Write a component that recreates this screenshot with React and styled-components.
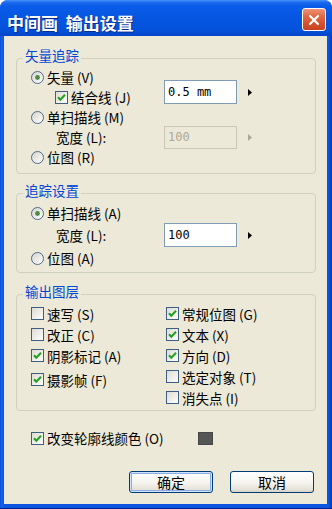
import React, { useId } from 'react';
import styled, { createGlobalStyle } from 'styled-components';

const GlobalStyle = createGlobalStyle`
  html, body {
    margin: 0;
    padding: 0;
    background: #ffffff;
  }
  body {
    font-family: "Noto Sans CJK SC", "Noto Sans", sans-serif;
    color: #000;
  }
`;

const Window = styled.div`
  width: 332px;
  height: 509px;
  box-sizing: border-box;
  display: flex;
  flex-direction: column;
  background: linear-gradient(to right, #0A4FD8 0, #1A62EA 2px, #0B55E0 4px, #0B55E0 calc(100% - 3px), #0036B8 100%);
  border-radius: 8px 8px 0 0;
  border-bottom: 1px solid #001E8C;
  overflow: hidden;
`;

const TitleBar = styled.div`
  height: 36px;
  flex-shrink: 0;
  display: flex;
  align-items: center;
  justify-content: space-between;
  padding: 0 6px 0 7px;
  background: linear-gradient(
    to bottom,
    #4A95FA 0,
    #1F6EF0 2px,
    #0A5CE8 6px,
    #0656E2 50%,
    #0551D9 85%,
    #0545C8 100%
  );
`;

const Title = styled.span`
  color: #ffffff;
  font-size: 17px;
  font-weight: bold;
  padding-top: 8px;
  word-spacing: 4px;
  text-shadow: 1px 1px 0 #0B2A8A;
`;

const CloseButton = styled.div`
  width: 24px;
  height: 23px;
  box-sizing: border-box;
  margin-top: 3px;
  border: 1px solid #ffffff;
  border-radius: 3px;
  background: linear-gradient(to bottom, #EE9478 0%, #E16845 35%, #D4502C 70%, #C8421F 100%);
  display: flex;
  align-items: center;
  justify-content: center;
`;

const Body = styled.div`
  flex: 1;
  margin: 0 5px 4px 4px;
  background: #ECE9D8;
  padding: 22px 11px 0 12px;
  display: flex;
  flex-direction: column;
`;

const Group = styled.div`
  border: 1px solid #D0D0BF;
  border-radius: 4px;
  margin-top: ${p => p.$gap || 0}px;
  padding: 0 8px ${p => p.$padBottom}px 14px;
`;

const GroupTitle = styled.div`
  width: fit-content;
  margin: -12px 0 ${p => p.$after}px -8px;
  padding: 0 2px;
  background: #ECE9D8;
  color: #0046D5;
  font-size: 13.5px;
  line-height: 16px;
`;

const TraceGrid = styled.div`
  display: grid;
  grid-template-columns: 133px auto;
  grid-template-rows: ${p => p.$rows};
  align-items: center;
`;

const OptionRow = styled.div`
  display: flex;
  align-items: center;
  gap: 3px;
  height: ${p => p.$height || 20}px;
  padding-left: ${p => p.$indent || 0}px;
  margin-top: ${p => p.$shift || 0}px;
  grid-column: 1;
`;

const Label = styled.span`
  font-size: 13.5px;
  line-height: 16px;
  white-space: nowrap;
`;

const SpinField = styled.div`
  grid-column: 2;
  grid-row: ${p => p.$row};
  align-self: ${p => p.$align || 'center'};
  margin-bottom: ${p => p.$lift || 0}px;
  display: flex;
  align-items: center;
  gap: 11px;
`;

const TextBox = styled.div`
  width: 73px;
  height: ${p => (p.$disabled ? 23 : 24)}px;
  box-sizing: border-box;
  border: 1px solid ${p => (p.$disabled ? '#C9C7BA' : '#7F9DB9')};
  background: ${p => (p.$disabled ? '#ECE9D8' : '#ffffff')};
  color: ${p => (p.$disabled ? '#ACA899' : '#000000')};
  font-family: "DejaVu Sans Mono", "Liberation Mono", monospace;
  font-size: 12px;
  padding: 0 3px;
  display: flex;
  align-items: center;
`;

const LayerColumns = styled.div`
  display: flex;
`;

const LayerColumn = styled.div`
  width: 135px;
  display: flex;
  flex-direction: column;
`;

const OutlineRow = styled.div`
  display: grid;
  grid-template-columns: 167px auto;
  align-items: center;
  height: 20px;
  margin-top: 17px;
  padding-left: 15px;
`;

const Swatch = styled.div`
  width: 15px;
  height: 13px;
  box-sizing: border-box;
  background: #555555;
  border: 1px solid #474747;
`;

const ButtonRow = styled.div`
  display: flex;
  justify-content: flex-end;
  gap: 17px;
  margin-top: 23px;
  padding-right: 2px;
`;

const Button = styled.button`
  width: 84px;
  height: 22px;
  padding: 0;
  font-family: "Noto Sans CJK SC", sans-serif;
  font-size: 14px;
  line-height: 1;
  color: #000;
  border: 1px solid #003C74;
  border-radius: 3px;
  background: linear-gradient(to bottom, #FFFFFF 0%, #F5F4EF 55%, #E3E0D6 90%, #D6D0C5 100%);
  box-shadow: ${p => (p.$default ? 'inset 0 0 0 1px #CEE3FF, inset 0 0 0 2px #89ADE4' : 'none')};
`;

const Radio = ({ checked }) => {
  const id = useId();
  return (
    <svg width="13" height="13" viewBox="0 0 13 13">
      <defs>
        <linearGradient id={id} x1="0" y1="0" x2="1" y2="1">
          <stop offset="0" stopColor="#D6D4C8" />
          <stop offset="1" stopColor="#FFFFFF" />
        </linearGradient>
      </defs>
      <circle cx="6.5" cy="6.5" r="6" fill={`url(#${id})`} stroke="#4C6A8C" />
      {checked && <circle cx="6.5" cy="6.5" r="2.4" fill="#4C8A47" />}
    </svg>
  );
};

const Checkbox = ({ checked }) => {
  const id = useId();
  return (
    <svg width="13" height="13" viewBox="0 0 13 13">
      <defs>
        <linearGradient id={id} x1="0" y1="0" x2="1" y2="1">
          <stop offset="0" stopColor="#DCDAD0" />
          <stop offset="1" stopColor="#FFFFFF" />
        </linearGradient>
      </defs>
      <rect x="0.5" y="0.5" width="12" height="12" fill={`url(#${id})`} stroke="#3E5F82" />
      {checked && (
        <path d="M3 6.3 L5.3 8.8 L10 3.8" fill="none" stroke="#21A121" strokeWidth="2" />
      )}
    </svg>
  );
};

const Arrow = ({ disabled }) => (
  <svg width="4" height="7" viewBox="0 0 4 7">
    <polygon points="0,0 4,3.5 0,7" fill={disabled ? '#ACA899' : '#000000'} />
  </svg>
);

const CloseIcon = () => (
  <svg width="12" height="12" viewBox="0 0 12 12">
    <path d="M2 2 L10 10 M10 2 L2 10" stroke="#ffffff" strokeWidth="2.2" strokeLinecap="round" />
  </svg>
);

const leftLayers = [
  { label: '速写 (S)', checked: false },
  { label: '改正 (C)', checked: false },
  { label: '阴影标记 (A)', checked: true },
  { label: '摄影帧 (F)', checked: true, shift: 3 },
];

const rightLayers = [
  { label: '常规位图 (G)', checked: true },
  { label: '文本 (X)', checked: true },
  { label: '方向 (D)', checked: true },
  { label: '选定对象 (T)', checked: false },
  { label: '消失点 (I)', checked: false },
];

const LayerList = ({ items }) => (
  <LayerColumn>
    {items.map(item => (
      <OptionRow key={item.label} $height={21} $shift={item.shift}>
        <Checkbox checked={item.checked} />
        <Label>{item.label}</Label>
      </OptionRow>
    ))}
  </LayerColumn>
);

export default function App() {
  return (
    <>
      <GlobalStyle />
      <Window>
        <TitleBar>
          <Title>中间画 输出设置</Title>
          <CloseButton>
            <CloseIcon />
          </CloseButton>
        </TitleBar>
        <Body>
          <Group $padBottom={6}>
            <GroupTitle $after={4}>矢量追踪</GroupTitle>
            <TraceGrid $rows="20px 20px 20px 20px 20px">
              <OptionRow style={{ gridRow: 1 }}>
                <Radio checked />
                <Label>矢量 (V)</Label>
              </OptionRow>
              <OptionRow style={{ gridRow: 2 }} $indent={24}>
                <Checkbox checked />
                <Label>结合线 (J)</Label>
              </OptionRow>
              <SpinField $row="1 / 3" $align="end" $lift={3}>
                <TextBox>0.5 mm</TextBox>
                <Arrow />
              </SpinField>
              <OptionRow style={{ gridRow: 3 }}>
                <Radio />
                <Label>单扫描线 (M)</Label>
              </OptionRow>
              <OptionRow style={{ gridRow: 4 }} $indent={25}>
                <Label>宽度 (L):</Label>
              </OptionRow>
              <SpinField $row="4">
                <TextBox $disabled>100</TextBox>
                <Arrow disabled />
              </SpinField>
              <OptionRow style={{ gridRow: 5 }}>
                <Radio />
                <Label>位图 (R)</Label>
              </OptionRow>
            </TraceGrid>
          </Group>

          <Group $gap={19} $padBottom={3}>
            <GroupTitle $after={5}>追踪设置</GroupTitle>
            <TraceGrid $rows="20px 24px 22px">
              <OptionRow style={{ gridRow: 1 }}>
                <Radio checked />
                <Label>单扫描线 (A)</Label>
              </OptionRow>
              <OptionRow style={{ gridRow: 2 }} $indent={25}>
                <Label>宽度 (L):</Label>
              </OptionRow>
              <SpinField $row="2">
                <TextBox>100</TextBox>
                <Arrow />
              </SpinField>
              <OptionRow style={{ gridRow: 3 }}>
                <Radio />
                <Label>位图 (A)</Label>
              </OptionRow>
            </TraceGrid>
          </Group>

          <Group $gap={21} $padBottom={2}>
            <GroupTitle $after={4}>输出图层</GroupTitle>
            <LayerColumns>
              <LayerList items={leftLayers} />
              <LayerList items={rightLayers} />
            </LayerColumns>
          </Group>

          <OutlineRow>
            <OptionRow>
              <Checkbox checked />
              <Label>改变轮廓线颜色 (O)</Label>
            </OptionRow>
            <Swatch />
          </OutlineRow>

          <ButtonRow>
            <Button $default>确定</Button>
            <Button>取消</Button>
          </ButtonRow>
        </Body>
      </Window>
    </>
  );
}
